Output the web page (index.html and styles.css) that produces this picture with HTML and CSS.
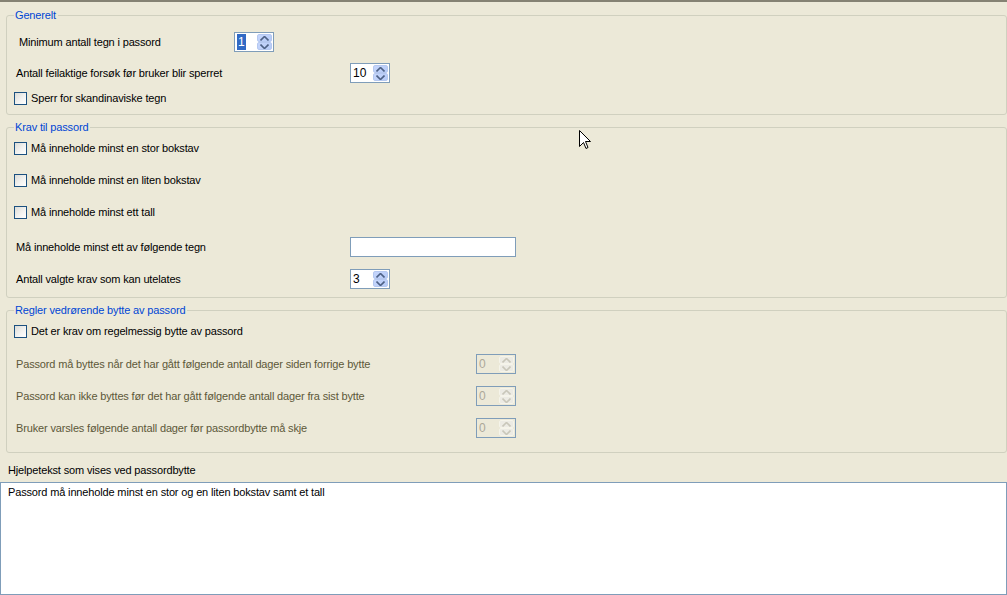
FILE: index.html
```html
<!DOCTYPE html>
<html lang="no">
  <head>
    <meta charset="UTF-8" />
    <title>Passordregler</title>
    <link rel="stylesheet" href="styles.css">
  </head>

  <body>
    <div class="top-bar"></div>

    <!-- Generelt -->
    <fieldset class="group group-general">
      <legend>Generelt</legend>
      <div class="row row-min">
        <span class="label label-min">Minimum antall tegn i passord</span>
        <div class="spin">
          <span class="spin-value"><span class="selected">1</span></span>
          <span class="spin-btns">
            <span class="spin-btn"><svg width="9" height="5" viewBox="0 0 9 5"><path d="M0.5 4.5 L4.5 0.5 L8.5 4.5" /></svg></span>
            <span class="spin-btn"><svg width="9" height="5" viewBox="0 0 9 5"><path d="M0.5 0.5 L4.5 4.5 L8.5 0.5" /></svg></span>
          </span>
        </div>
      </div>
      <div class="row row-tries">
        <span class="label label-wide">Antall feilaktige forsøk før bruker blir sperret</span>
        <div class="spin">
          <span class="spin-value">10</span>
          <span class="spin-btns">
            <span class="spin-btn"><svg width="9" height="5" viewBox="0 0 9 5"><path d="M0.5 4.5 L4.5 0.5 L8.5 4.5" /></svg></span>
            <span class="spin-btn"><svg width="9" height="5" viewBox="0 0 9 5"><path d="M0.5 0.5 L4.5 4.5 L8.5 0.5" /></svg></span>
          </span>
        </div>
      </div>
      <label class="row row-scand">
        <span class="check"></span>
        <span class="check-text">Sperr for skandinaviske tegn</span>
      </label>
    </fieldset>

    <!-- Krav til passord -->
    <fieldset class="group group-req">
      <legend>Krav til passord</legend>
      <label class="row row-check-first">
        <span class="check"></span>
        <span class="check-text">Må inneholde minst en stor bokstav</span>
      </label>
      <label class="row row-check">
        <span class="check"></span>
        <span class="check-text">Må inneholde minst en liten bokstav</span>
      </label>
      <label class="row row-check">
        <span class="check"></span>
        <span class="check-text">Må inneholde minst ett tall</span>
      </label>
      <div class="row row-chars">
        <span class="label label-wide">Må inneholde minst ett av følgende tegn</span>
        <span class="textbox"></span>
      </div>
      <div class="row row-skip">
        <span class="label label-wide">Antall valgte krav som kan utelates</span>
        <div class="spin">
          <span class="spin-value">3</span>
          <span class="spin-btns">
            <span class="spin-btn"><svg width="9" height="5" viewBox="0 0 9 5"><path d="M0.5 4.5 L4.5 0.5 L8.5 4.5" /></svg></span>
            <span class="spin-btn"><svg width="9" height="5" viewBox="0 0 9 5"><path d="M0.5 0.5 L4.5 4.5 L8.5 0.5" /></svg></span>
          </span>
        </div>
      </div>
    </fieldset>

    <!-- Regler vedrørende bytte av passord -->
    <fieldset class="group group-change">
      <legend>Regler vedrørende bytte av passord</legend>
      <label class="row row-check-first">
        <span class="check"></span>
        <span class="check-text">Det er krav om regelmessig bytte av passord</span>
      </label>
      <div class="row row-days-first disabled">
        <span class="label label-days">Passord må byttes når det har gått følgende antall dager siden forrige bytte</span>
        <div class="spin">
          <span class="spin-value">0</span>
          <span class="spin-btns">
            <span class="spin-btn"><svg width="9" height="5" viewBox="0 0 9 5"><path d="M0.5 4.5 L4.5 0.5 L8.5 4.5" /></svg></span>
            <span class="spin-btn"><svg width="9" height="5" viewBox="0 0 9 5"><path d="M0.5 0.5 L4.5 4.5 L8.5 0.5" /></svg></span>
          </span>
        </div>
      </div>
      <div class="row row-days disabled">
        <span class="label label-days">Passord kan ikke byttes før det har gått følgende antall dager fra sist bytte</span>
        <div class="spin">
          <span class="spin-value">0</span>
          <span class="spin-btns">
            <span class="spin-btn"><svg width="9" height="5" viewBox="0 0 9 5"><path d="M0.5 4.5 L4.5 0.5 L8.5 4.5" /></svg></span>
            <span class="spin-btn"><svg width="9" height="5" viewBox="0 0 9 5"><path d="M0.5 0.5 L4.5 4.5 L8.5 0.5" /></svg></span>
          </span>
        </div>
      </div>
      <div class="row row-days disabled">
        <span class="label label-days">Bruker varsles følgende antall dager før passordbytte må skje</span>
        <div class="spin">
          <span class="spin-value">0</span>
          <span class="spin-btns">
            <span class="spin-btn"><svg width="9" height="5" viewBox="0 0 9 5"><path d="M0.5 4.5 L4.5 0.5 L8.5 4.5" /></svg></span>
            <span class="spin-btn"><svg width="9" height="5" viewBox="0 0 9 5"><path d="M0.5 0.5 L4.5 4.5 L8.5 0.5" /></svg></span>
          </span>
        </div>
      </div>
    </fieldset>

    <!-- Hjelpetekst -->
    <div class="help-label">Hjelpetekst som vises ved passordbytte</div>
    <div class="help-text">Passord må inneholde minst en stor og en liten bokstav samt et tall</div>

    <!-- musepeker -->
    <svg class="pointer" width="12" height="20" viewBox="0 0 12 20">
      <path d="M0.5 0.5 L0.5 16.5 L4.5 12.5 L7 18.5 L9 17.5 L6.5 11.5 L11.5 11.5 Z" fill="#fff" stroke="#000" stroke-width="1" />
    </svg>
  </body>
</html>
```

FILE: styles.css
```css
* {
  margin: 0;
  padding: 0;
  box-sizing: border-box;
}

body {
  position: relative;
  height: 595px;
  overflow: hidden;
  background-color: #ece9d8;
  font-family: "Liberation Sans", Arial, sans-serif;
  font-size: 11px;
  line-height: 13px;
  letter-spacing: -0.15px;
  color: #000;
}

.top-bar {
  height: 2px;
  background-color: #858273;
}

/* gruppeboks */
.group {
  margin: 6px 0 0 6px;
  padding: 0 0 0 7px;
  border: 1px solid #d0d0bf;
  border-radius: 3px;
}

.group legend {
  margin-left: 0;
  padding: 0 2px 0 1px;
  line-height: 14px;
  color: #0046d5;
}

.group-general {
  padding-top: 10px;
  padding-bottom: 6px;
}

.group-req {
  margin-top: 5px;
  padding-top: 4px;
  padding-bottom: 8px;
}

.group-change {
  margin-top: 5px;
  padding-top: 4px;
  padding-bottom: 14px;
}

.row {
  display: flex;
  align-items: center;
  height: 20px;
}

.row-tries {
  margin-top: 11px;
}

.row-scand {
  margin-top: 5px;
}

.row-check {
  margin-top: 12px;
}

.row-chars {
  margin-top: 15px;
}

.row-skip {
  margin-top: 12px;
}

.row-days-first {
  margin-top: 13px;
}

.row-days {
  margin-top: 12px;
}

.label {
  flex: none;
  margin-left: 2px;
}

.label-min {
  width: 215px;
  margin-left: 5px;
}

.label-wide {
  width: 334px;
}

.label-days {
  width: 460px;
}

.disabled .label {
  color: #5c5838;
}

/* avkrysningsboks */
.check {
  flex: none;
  width: 13px;
  height: 13px;
  border: 1px solid #1c5180;
  background: linear-gradient(135deg, #dcdcd7 0%, #f4f4f2 60%, #fff 100%);
}

.check-text {
  margin-left: 4px;
}

/* tallvelger */
.spin {
  display: flex;
  flex: none;
  width: 40px;
  height: 20px;
  padding: 1px;
  border: 1px solid #7f9db9;
  background-color: #fff;
}

.spin-value {
  flex: 1;
  padding-left: 1px;
  font-size: 12px;
  line-height: 16px;
  letter-spacing: 0;
}

.selected {
  display: inline-block;
  padding: 0 1px;
  background-color: #316ac5;
  color: #fff;
}

.spin-btns {
  display: flex;
  flex-direction: column;
  width: 15px;
}

.spin-btn {
  display: flex;
  flex: 1;
  align-items: center;
  justify-content: center;
  border: 1px solid #b5c8f0;
  border-radius: 2px;
  background: linear-gradient(135deg, #c6d6fc 0%, #b6cbf7 100%);
}

.spin-btn svg path {
  fill: none;
  stroke: #4d6185;
  stroke-width: 1.6;
}

.disabled .spin {
  background-color: #ece9d8;
}

.disabled .spin-value {
  color: #aca899;
}

.disabled .spin-btn {
  border-color: #f5f4ea;
  background: #ecebe4;
}

.disabled .spin-btn svg path {
  stroke: #c9c7ba;
}

/* tekstfelt */
.textbox {
  display: block;
  width: 166px;
  height: 20px;
  border: 1px solid #7f9db9;
  background-color: #fff;
}

.help-label {
  height: 29px;
  padding: 11px 0 0 8px;
}

.help-text {
  height: 113px;
  padding: 3px 7px;
  border: 1px solid #7f9db9;
  background-color: #fff;
}

.pointer {
  position: absolute;
  top: 130px;
  left: 579px;
}
```
